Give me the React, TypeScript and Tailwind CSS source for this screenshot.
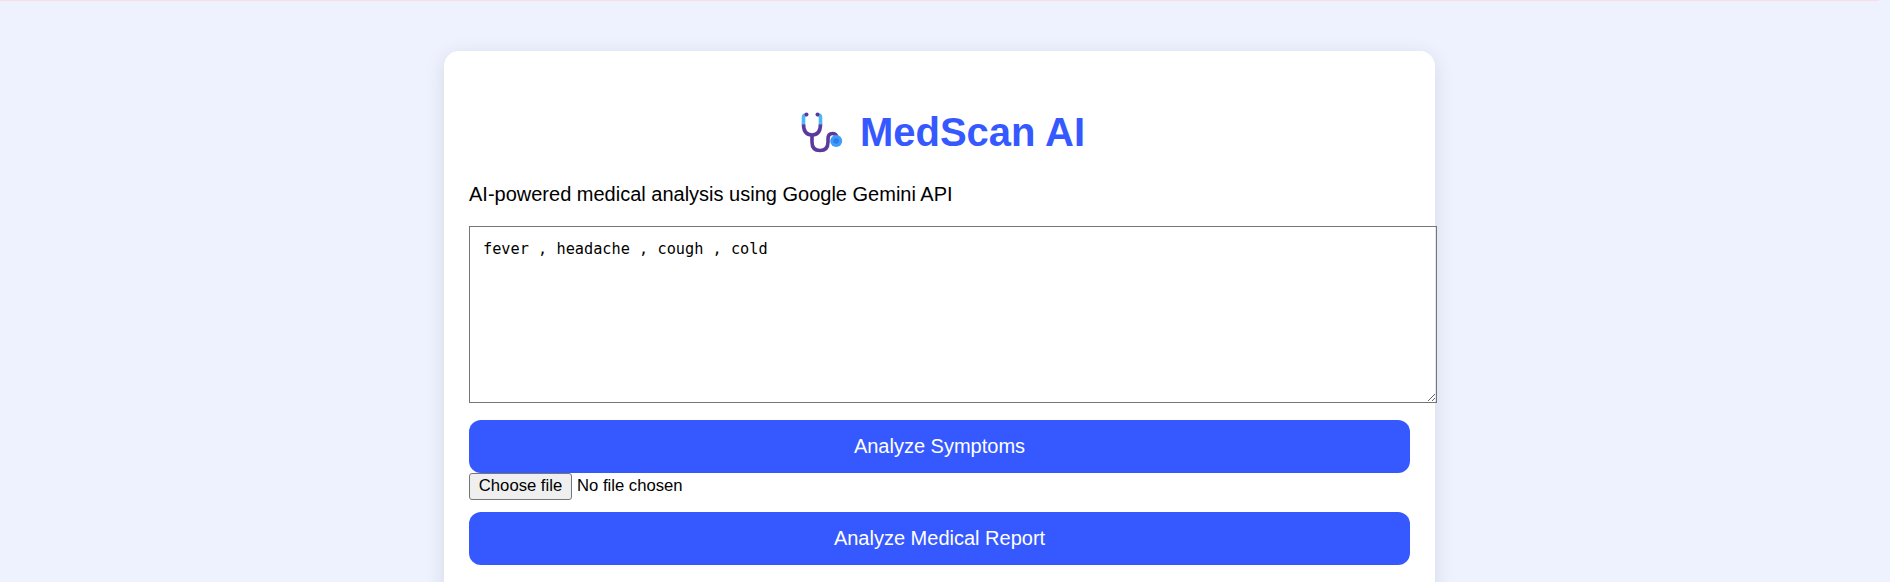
function StethoscopeLogo() {
	return (
		<svg width="52" height="48" viewBox="-1.5 -1 52 48" fill="none" className="shrink-0">
			<path d="M8 15 Q8 26 16.5 26 Q25 26 25 15" stroke="#5a3a9c" strokeWidth="3.6" />
			<path d="M16.5 26 V33 Q16.5 41.5 24.5 41.5 Q32.5 41.5 32.5 33 V30 Q32.5 24.5 37 24.5 Q40.5 24.5 41.5 28" stroke="#5a3a9c" strokeWidth="3.6" />
			<path d="M11 6 H10 Q8 6 8 8.5 V15.5" stroke="#4db6f7" strokeWidth="3.6" />
			<path d="M22 6 H23 Q25 6 25 8.5 V15.5" stroke="#4db6f7" strokeWidth="3.6" />
			<circle cx="11" cy="5.5" r="2" fill="#5a3a9c" />
			<circle cx="22" cy="5.5" r="2" fill="#5a3a9c" />
			<circle cx="40.7" cy="32" r="6" fill="#3f9dfa" />
			<circle cx="40.7" cy="32" r="2.8" fill="#2b7de9" />
		</svg>
	)
}

export default function App() {
	return (
		<div className="h-screen overflow-hidden bg-[#eef2ff] pr-[11px] font-['Liberation_Sans',Arial,sans-serif] text-black">
			<div className="h-px bg-[#fbdde6]" />
			<div className="mx-auto mt-[50px] w-[991px] rounded-[15px] bg-white px-[25px] pt-[25px] pb-[40px] shadow-[0_4px_20px_rgba(0,0,0,0.1)]">
				<h1 className="mt-[32px] mb-[27px] flex h-[48px] items-center justify-center gap-[14px] text-[40px] leading-[46px] font-bold text-[#3659ff]">
					<StethoscopeLogo />
					<span>MedScan AI</span>
				</h1>
				<p className="mb-[20px] text-[20px] leading-[23px]">AI-powered medical analysis using Google Gemini API</p>
				<textarea
					defaultValue="fever , headache , cough , cold"
					className="block h-[177px] w-[968px] resize rounded-none border border-[#767676] p-[13px] font-['DejaVu_Sans_Mono',monospace] text-[15.25px] leading-[19px] outline-none"
				/>
				<button className="mt-[17px] block h-[53px] w-full rounded-[12px] bg-[#3659ff] pb-[2px] text-[20px] text-white">Analyze Symptoms</button>
				<div className="flex h-[27px] items-center gap-[5px] text-[16.67px]">
					<button className="h-[27px] w-[103px] rounded-[3px] border border-[#767676] bg-[#efefef] pb-[2px] leading-[19px]">Choose file</button>
					<span className="-mt-[2px]">No file chosen</span>
				</div>
				<button className="mt-[12px] block h-[53px] w-full rounded-[12px] bg-[#3659ff] pb-[2px] text-[20px] text-white">Analyze Medical Report</button>
			</div>
		</div>
	)
}
